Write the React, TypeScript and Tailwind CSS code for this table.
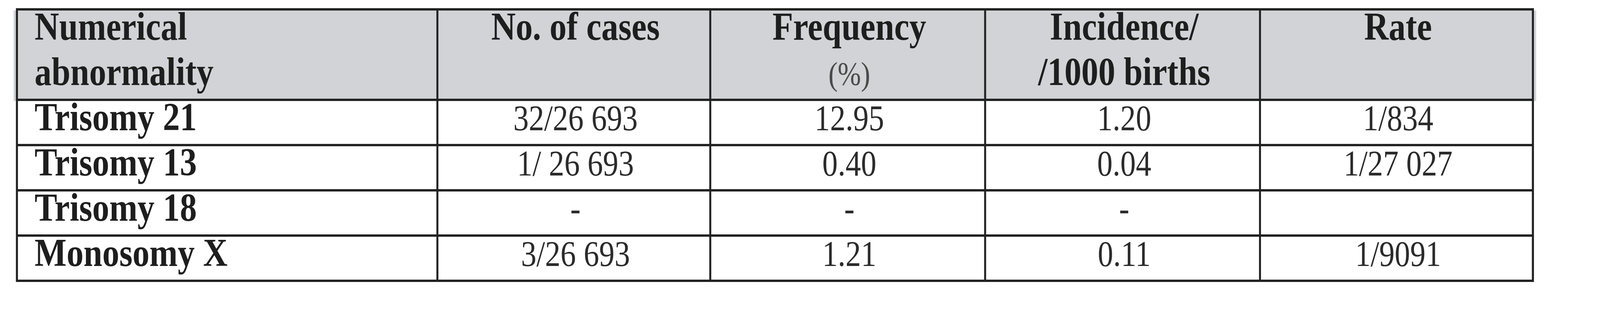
import React from "react";

type Row = { label: string; cells: string[] };

const rows: Row[] = [
  { label: "Trisomy 21", cells: ["32/26 693", "12.95", "1.20", "1/834"] },
  { label: "Trisomy 13", cells: ["1/ 26 693", "0.40", "0.04", "1/27 027"] },
  { label: "Trisomy 18", cells: ["-", "-", "-", ""] },
  { label: "Monosomy X", cells: ["3/26 693", "1.21", "0.11", "1/9091"] },
];

const DESIGN_WIDTH = 4814;

function Line({ children, center }: { children: React.ReactNode; center?: boolean }) {
  return (
    <div
      className={
        "-mt-[17px] text-[102px] leading-[116px] font-bold text-[#1e1e1e] whitespace-nowrap " +
        (center ? "text-center" : "text-left")
      }
    >
      {children}
    </div>
  );
}

function Num({ children }: { children: React.ReactNode }) {
  return <span className="text-[93px] font-normal text-[#2b2b2b]">{children}</span>;
}

export default function App() {
  const fit =
    typeof window !== "undefined" ? Math.min(1, window.innerWidth / DESIGN_WIDTH) : 1;

  return (
    <div className="w-full h-[800px] overflow-hidden bg-white">
      <div
        className="w-[4814px] h-[800px] origin-top-left pt-[21px] pl-[41px] font-['Liberation_Serif',serif]"
        style={{ transform: `scaleX(${fit})` }}
      >
        <div className="w-fit px-[7px] bg-[linear-gradient(to_bottom,transparent_6px,#d1d3d6_6px,#d1d3d6_238px,transparent_238px)]">
          <div className="grid w-[4567px] grid-cols-[1259px_815px_821px_821px_815px] grid-rows-[226px_110px_110px_110px_110px] gap-[6px] border-[6px] border-[#222] bg-[#222]">
            <div className="bg-[#d1d3d6] px-[50px]">
              <Line>
                Numerical
                <br />
                abnormality
              </Line>
            </div>
            <div className="bg-[#d1d3d6] pl-[10px]">
              <Line center>No. of cases</Line>
            </div>
            <div className="bg-[#d1d3d6] pl-[10px]">
              <Line center>
                Frequency
                <br />
                <span className="text-[84px] font-normal text-[#4a4a4a]">(%)</span>
              </Line>
            </div>
            <div className="bg-[#d1d3d6] pl-[10px]">
              <Line center>
                Incidence/
                <br />
                /1000 births
              </Line>
            </div>
            <div className="bg-[#d1d3d6] pl-[10px]">
              <Line center>Rate</Line>
            </div>

            {rows.map((r) => (
              <React.Fragment key={r.label}>
                <div className="bg-white px-[50px]">
                  <Line>{r.label}</Line>
                </div>
                {r.cells.map((c, i) => (
                  <div key={i} className="bg-white pl-[10px]">
                    <Line center>
                      <Num>{c}</Num>
                    </Line>
                  </div>
                ))}
              </React.Fragment>
            ))}
          </div>
        </div>
      </div>
    </div>
  );
}
